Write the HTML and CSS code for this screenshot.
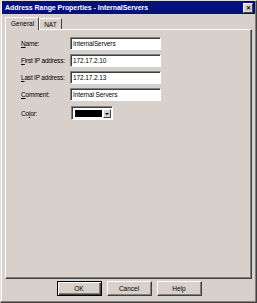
FILE: index.html
```html
<!DOCTYPE html>
<html lang="en">
<head>
  <meta charset="UTF-8" />
  <title>Address Range Properties - InternalServers</title>
  <link rel="stylesheet" href="styles.css">
</head>
<body>
  <div class="window">
    <div class="titlebar">
      <span class="title">Address Range Properties - InternalServers</span>
      <span class="close">&#x2715;</span>
    </div>

    <div class="tabs">
      <div class="tab selected">General</div>
      <div class="tab">NAT</div>
    </div>

    <div class="panel">
      <div class="row">
        <label class="label"><u>N</u>ame:</label>
        <div class="field">InternalServers</div>
      </div>
      <div class="row">
        <label class="label"><u>F</u>irst IP address:</label>
        <div class="field">172.17.2.10</div>
      </div>
      <div class="row">
        <label class="label"><u>L</u>ast IP address:</label>
        <div class="field">172.17.2.13</div>
      </div>
      <div class="row">
        <label class="label"><u>C</u>omment:</label>
        <div class="field">Internal Servers</div>
      </div>
      <div class="row color-row">
        <label class="label">Co<u>l</u>or:</label>
        <div class="combo">
          <div class="swatch-box"><div class="swatch"></div></div>
          <div class="drop"><span class="arrow"></span></div>
        </div>
      </div>
    </div>

    <div class="buttons">
      <div class="btn default">OK</div>
      <div class="btn">Cancel</div>
      <div class="btn">Help</div>
    </div>
  </div>
</body>
</html>
```

FILE: styles.css
```css
html, body {
  margin: 0;
  padding: 0;
  background: #d8d0ca;
}

.window {
  width: 257px;
  height: 303px;
  box-sizing: border-box;
  background: #d8d0ca;
  border: 1px solid;
  border-color: #e4ded8 #404040 #404040 #e4ded8;
  box-shadow: inset -1px -1px 0 #808080, inset 1px 1px 0 #fff;
  display: flex;
  flex-direction: column;
  font-family: "Liberation Sans", Arial, sans-serif;
  font-size: 6.5px;
  color: #000;
}

.titlebar {
  height: 13px;
  margin: 0 1px;
  background: #06107c;
  color: #fff;
  display: flex;
  align-items: center;
  justify-content: space-between;
  padding: 0 2px 0 3px;
}

.title {
  font-weight: bold;
  font-size: 7px;
  letter-spacing: -0.05px;
}

.close {
  width: 8px;
  height: 8px;
  background: #d8d0ca;
  color: #000;
  font-size: 6px;
  font-weight: bold;
  line-height: 8px;
  text-align: center;
  border: 1px solid;
  border-color: #fff #404040 #404040 #fff;
}

.tabs {
  display: flex;
  align-items: flex-end;
  height: 14px;
  margin: 1px 0 0 4px;
}

.tab {
  height: 11px;
  line-height: 11px;
  padding: 0 4px;
  border-top: 1px solid #fff;
  border-left: 1px solid #fff;
  border-right: 1px solid #404040;
  box-sizing: border-box;
}

.tab.selected {
  height: 13px;
  line-height: 12px;
  padding: 0 4px 0 5px;
  border-right: 1px solid #404040;
  background: #d8d0ca;
  position: relative;
  z-index: 1;
  margin-bottom: -1px;
}

.panel {
  height: 250px;
  margin: 0 4px 0 4px;
  box-sizing: border-box;
  border: 1px solid;
  border-color: #fff #404040 #404040 #fff;
  box-shadow: inset -1px -1px 0 #808080;
  padding: 7px 0 0 15px;
  display: flex;
  flex-direction: column;
  gap: 4px;
}

.row {
  display: flex;
  align-items: center;
  height: 13px;
}

.color-row {
  height: 14px;
  margin-top: 1px;
}

.label {
  width: 49px;
  white-space: nowrap;
  letter-spacing: -0.2px;
}

.field {
  width: 91px;
  height: 13px;
  box-sizing: border-box;
  background: #fff;
  border: 1px solid;
  border-color: #808080 #fff #fff #808080;
  box-shadow: inset 1px 1px 0 #404040;
  padding: 0 2px;
  line-height: 11px;
  font-size: 6.5px;
  letter-spacing: -0.1px;
}

.combo {
  width: 42px;
  height: 14px;
  margin-left: 1px;
  box-sizing: border-box;
  background: #fff;
  border: 1px solid;
  border-color: #808080 #fff #fff #808080;
  box-shadow: inset 1px 1px 0 #404040;
  display: flex;
  padding: 2px 1px 1px 2px;
}

.swatch-box {
  flex: 1;
  padding: 1px;
}

.swatch {
  height: 100%;
  background: #000;
}

.drop {
  width: 8px;
  background: #d8d0ca;
  box-sizing: border-box;
  border: 1px solid;
  border-color: #fff #404040 #404040 #fff;
  display: flex;
  align-items: center;
  justify-content: center;
}

.arrow {
  width: 0;
  height: 0;
  border-left: 2px solid transparent;
  border-right: 2px solid transparent;
  border-top: 2px solid #000;
}

.buttons {
  display: flex;
  justify-content: center;
  gap: 5px;
  margin-top: 2px;
  padding-left: 1px;
}

.btn {
  width: 45px;
  height: 15px;
  box-sizing: border-box;
  text-align: center;
  line-height: 13px;
  border: 1px solid;
  border-color: #fff #404040 #404040 #fff;
  box-shadow: inset -1px -1px 0 #808080;
}

.btn.default {
  border: 1px solid #000;
  box-shadow: inset 1px 1px 0 #fff, inset -1px -1px 0 #404040, inset -2px -2px 0 #808080;
}
```
